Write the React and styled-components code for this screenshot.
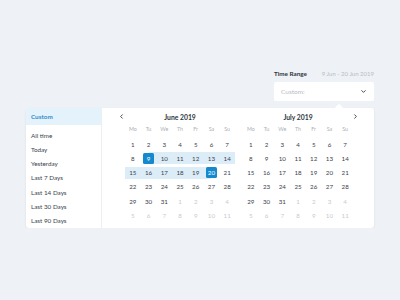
import React from "react";
import styled, { createGlobalStyle } from "styled-components";
import { ChevronLeft, ChevronRight, ChevronDown } from "lucide-react";

const GlobalStyle = createGlobalStyle`
  html, body {
    margin: 0;
    padding: 0;
    background: #eef1f5;
    font-family: "Lato", "Open Sans", sans-serif;
    -webkit-font-smoothing: antialiased;
  }
`;

const presets = [
  "All time",
  "Today",
  "Yesterday",
  "Last 7 Days",
  "Last 14 Days",
  "Last 30 Days",
  "Last 90 Days",
];

const weekdays = ["Mo", "Tu", "We", "Th", "Fr", "Sa", "Su"];

function buildDays(rangeStart, rangeEnd) {
  const days = [];
  for (let i = 1; i <= 31; i++) {
    let state = "plain";
    if (rangeStart && i === rangeStart) state = "start";
    else if (rangeEnd && i === rangeEnd) state = "end";
    else if (rangeStart && i > rangeStart && i < rangeEnd) state = "in";
    days.push({ n: i, state });
  }
  for (let i = 1; i <= 11; i++) days.push({ n: i, state: "muted" });
  return days;
}

export default function App() {
  return (
    <>
      <GlobalStyle />
      <Page>
        <Field>
          <LabelRow>
            <Label>Time Range</Label>
            <RangeText>9 Jun - 20 Jun 2019</RangeText>
          </LabelRow>
          <Select>
            <span>Custom:</span>
            <ChevronDown size={7} strokeWidth={3} color="#2d3540" />
          </Select>
        </Field>

        <Panel>
          <Sidebar>
            <Preset $active>Custom</Preset>
            <PresetList>
              {presets.map((p) => (
                <Preset key={p}>{p}</Preset>
              ))}
            </PresetList>
          </Sidebar>

          <Calendars>
            <Month title="June 2019" days={buildDays(9, 20)} prev />
            <Month title="July 2019" days={buildDays()} next />
          </Calendars>
        </Panel>
      </Page>
    </>
  );
}

function Month({ title, days, prev, next }) {
  return (
    <MonthBox>
      <MonthHeader>
        <Arrow $side="left">{prev && <ChevronLeft size={7} strokeWidth={3} />}</Arrow>
        <MonthTitle>{title}</MonthTitle>
        <Arrow $side="right">{next && <ChevronRight size={7} strokeWidth={3} />}</Arrow>
      </MonthHeader>
      <WeekRow>
        {weekdays.map((d) => (
          <Weekday key={d}>{d}</Weekday>
        ))}
      </WeekRow>
      <DayGrid>
        {days.map((d, i) => (
          <DayCell key={i} $state={d.state}>
            <DayNum $state={d.state}>{d.n}</DayNum>
          </DayCell>
        ))}
      </DayGrid>
    </MonthBox>
  );
}

const band = "#dcedf8";
const blue = "#1589cd";
const sans = `"Lato", "Open Sans", sans-serif`;

const Page = styled.div`
  width: 348px;
  margin-left: 26px;
  padding-top: 68px;
  display: flex;
  flex-direction: column;
  align-items: flex-end;
`;

const Field = styled.div`
  width: 100px;
  display: flex;
  flex-direction: column;
`;

const LabelRow = styled.div`
  height: 10px;
  display: flex;
  align-items: center;
  justify-content: space-between;
`;

const Label = styled.span`
  font-size: 6.3px;
  font-weight: 700;
  color: #2d3540;
`;

const RangeText = styled.span`
  font-size: 6px;
  color: #b8bec6;
`;

const Select = styled.div`
  margin-top: 4px;
  height: 19px;
  box-sizing: border-box;
  background: #fff;
  border-radius: 2px;
  padding: 0 7px 0 7px;
  display: flex;
  align-items: center;
  justify-content: space-between;
  font-size: 6.5px;
  color: #b8bdc4;
`;

const Panel = styled.div`
  position: relative;
  margin-top: 7px;
  width: 348px;
  height: 120px;
  background: #fff;
  border-radius: 3px;
  box-shadow: 0 1px 3px rgba(40, 60, 90, 0.08);
  display: flex;

  &::before {
    content: "";
    position: absolute;
    top: -3px;
    right: 32px;
    width: 6px;
    height: 6px;
    background: #fff;
    transform: rotate(45deg);
  }
`;

const Sidebar = styled.div`
  width: 75px;
  border-right: 1px solid #edf0f3;
  display: flex;
  flex-direction: column;
`;

const PresetList = styled.div`
  margin-top: 3px;
  display: flex;
  flex-direction: column;
`;

const Preset = styled.div`
  height: ${(p) => (p.$active ? "17px" : "14.3px")};
  display: flex;
  align-items: center;
  padding-left: 5px;
  font-size: 6.3px;
  font-weight: ${(p) => (p.$active ? 700 : 400)};
  color: ${(p) => (p.$active ? "#2f8dca" : "#3a424d")};
  background: ${(p) => (p.$active ? "#e4f2fb" : "transparent")};
  border-top-left-radius: ${(p) => (p.$active ? "3px" : "0")};
`;

const Calendars = styled.div`
  flex: 1;
  display: flex;
  gap: 8px;
  padding: 2px 21px 0 23px;
`;

const MonthBox = styled.div`
  width: 110px;
  display: flex;
  flex-direction: column;
`;

const MonthHeader = styled.div`
  height: 13px;
  position: relative;
  display: flex;
  align-items: center;
  justify-content: center;
`;

const MonthTitle = styled.span`
  font-family: ${sans};
  font-size: 6.8px;
  font-weight: 700;
  color: #2d3540;
`;

const Arrow = styled.span`
  position: absolute;
  top: 3px;
  ${(p) => (p.$side === "left" ? "left: -7px;" : "right: -6px;")}
  color: #2d3540;
  display: flex;
`;

const WeekRow = styled.div`
  height: 12px;
  display: grid;
  grid-template-columns: repeat(7, 1fr);
  align-items: center;
`;

const Weekday = styled.span`
  text-align: center;
  font-size: 5.3px;
  color: #a9afb7;
`;

const DayGrid = styled.div`
  margin-top: 3px;
  display: grid;
  grid-template-columns: repeat(7, 1fr);
  grid-auto-rows: 12px;
  row-gap: 2.3px;
`;

const cellBg = {
  in: band,
  start: `linear-gradient(to right, transparent 50%, ${band} 50%)`,
  end: `linear-gradient(to right, ${band} 50%, transparent 50%)`,
};

const DayCell = styled.div`
  display: flex;
  align-items: center;
  justify-content: center;
  background: ${(p) => cellBg[p.$state] || "transparent"};
`;

const DayNum = styled.span`
  width: 11.5px;
  height: 11.5px;
  display: flex;
  align-items: center;
  justify-content: center;
  border-radius: 1.5px;
  font-family: ${sans};
  font-size: 6.2px;
  color: ${(p) =>
    p.$state === "muted"
      ? "#c6cbd2"
      : p.$state === "start" || p.$state === "end"
      ? "#fff"
      : "#3a424d"};
  background: ${(p) =>
    p.$state === "start" || p.$state === "end" ? blue : "transparent"};
`;
